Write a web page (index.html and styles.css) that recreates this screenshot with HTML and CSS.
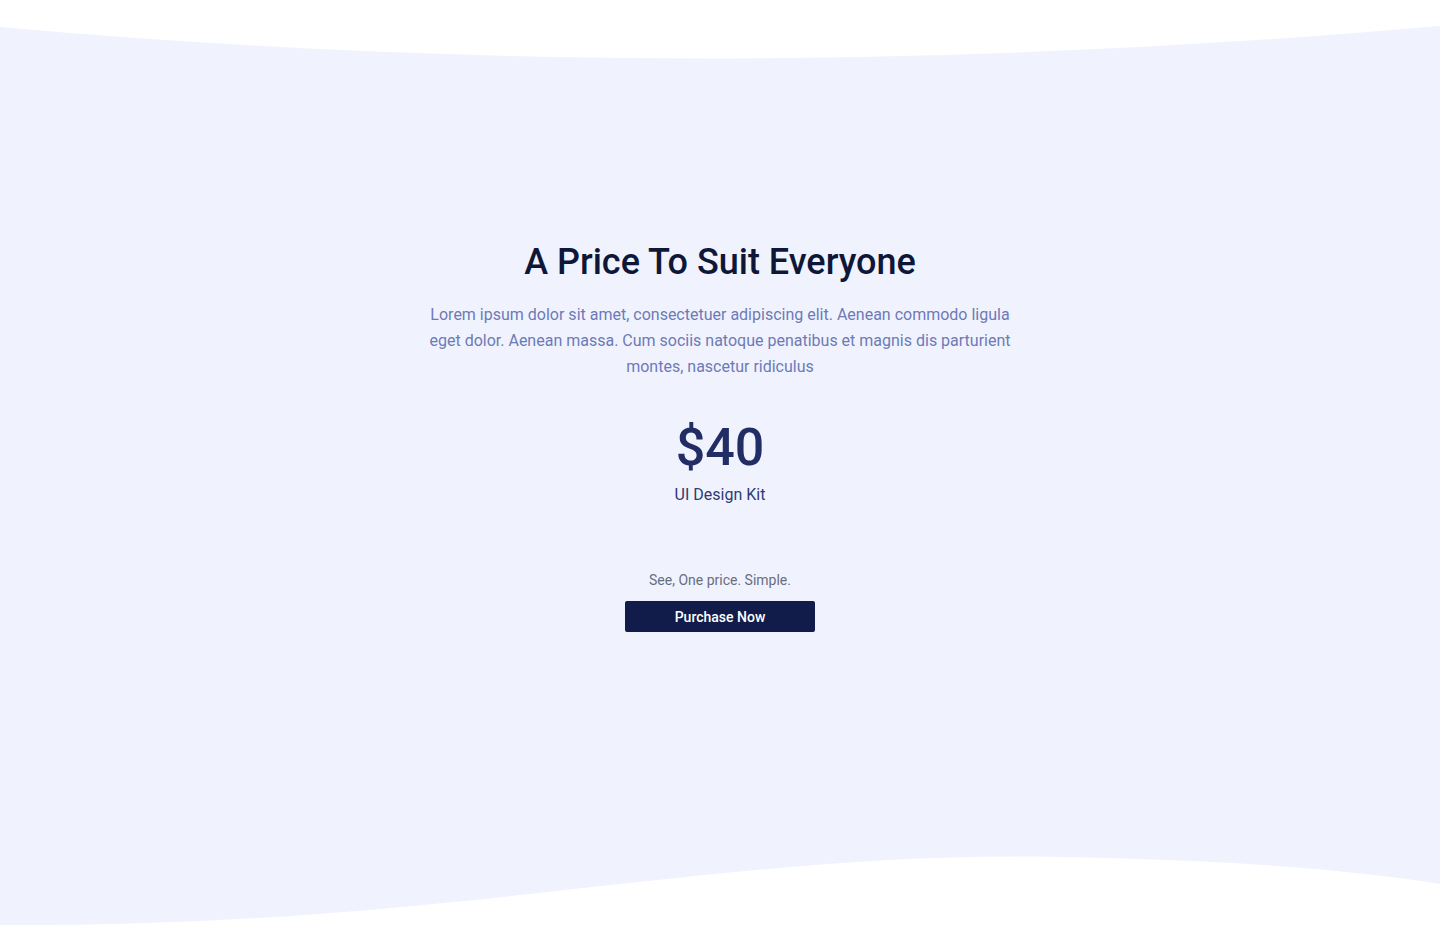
FILE: index.html
```html
<!DOCTYPE html>
<html lang="en">
<head>
<meta charset="utf-8">
<title>Pricing</title>
<link rel="stylesheet" href="styles.css">
</head>
<body>
<section class="pricing">
  <svg class="waves" width="1440" height="935" viewBox="0 0 1440 935" preserveAspectRatio="none" aria-hidden="true">
    <path d="M0,0 L1440,0 L1440,26 C960,68 480,70 0,27 Z" fill="#ffffff"/>
    <path d="M0,925 C450,928 720,850 1060,857 C1220,860 1340,868 1440,884 L1440,935 L0,935 Z" fill="#ffffff"/>
  </svg>
  <div class="content">
    <h1 class="title">A Price To Suit Everyone</h1>
    <p class="lead">Lorem ipsum dolor sit amet, consectetuer adipiscing elit. Aenean commodo ligula eget dolor. Aenean massa. Cum sociis natoque penatibus et magnis dis parturient montes, nascetur ridiculus</p>
    <div class="price">$40</div>
    <div class="product">UI Design Kit</div>
    <p class="note">See, One price. Simple.</p>
    <button class="buy" type="button">Purchase Now</button>
  </div>
</section>
</body>
</html>
```

FILE: styles.css
```css
html, body {
  margin: 0;
  padding: 0;
}
body {
  font-family: Roboto, "Liberation Sans", Arial, sans-serif;
  background: #ffffff;
}
.pricing {
  position: relative;
  height: 935px;
  background: #f0f3fe;
  overflow: hidden;
}
.waves {
  position: absolute;
  left: 0;
  top: 0;
  width: 100%;
  height: 100%;
  display: block;
}
.content {
  position: relative;
  display: flex;
  flex-direction: column;
  align-items: center;
  text-align: center;
  padding-top: 240px;
}
.title {
  margin: 0;
  font-size: 36px;
  line-height: 44px;
  font-weight: 500;
  color: #0f1739;
}
.lead {
  margin: 18px 0 0;
  max-width: 590px;
  font-size: 16px;
  line-height: 26px;
  color: #6d7ab6;
}
.price {
  margin-top: 36px;
  font-size: 52px;
  line-height: 64px;
  font-weight: 500;
  color: #222d65;
}
.product {
  margin-top: 3px;
  font-size: 16px;
  line-height: 24px;
  color: #2e3a74;
}
.note {
  margin: 63px 0 0;
  font-size: 14px;
  line-height: 20px;
  color: #686d80;
}
.buy {
  margin-top: 11px;
  width: 190px;
  height: 31px;
  border: 0;
  border-radius: 2px;
  background: #111c4a;
  color: #ffffff;
  font-family: inherit;
  font-size: 14px;
  font-weight: 500;
  cursor: pointer;
}
```
